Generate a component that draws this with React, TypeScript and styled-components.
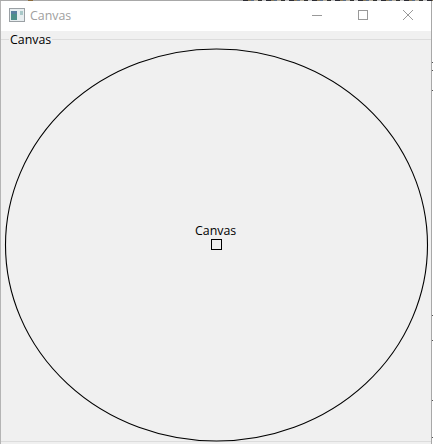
import React from "react";
import styled, { createGlobalStyle } from "styled-components";

const Global = createGlobalStyle`
  html, body { margin: 0; padding: 0; background: #f0f0f0; }
  #root { width: 433px; height: 444px; overflow: hidden; }
`;

const Desktop = styled.div`
  position: relative;
  width: 433px;
  height: 444px;
  background: #ffffff;
  display: flex;
  flex-direction: column;
`;

const TopEdge = styled.div`
  height: 1px;
  flex: none;
  background:
    repeating-linear-gradient(90deg, #2c2c34 0 5px, #8a7a5a 5px 8px, #5a6f8a 8px 11px, #b8b0a0 11px 15px, #333 15px 19px, #c8c8c8 19px 23px) 243px 0 / 190px 1px no-repeat,
    linear-gradient(90deg, #a8a8a8 0 28px, #8a6a3a 28px 33px, #a8a8a8 33px);
`;

const EdgeTick = styled.div<{ $y: number }>`
  position: absolute;
  right: 0;
  top: ${(p) => p.$y}px;
  width: 1px;
  height: 1px;
  background: #555555;
`;

const Window = styled.div`
  width: 432px;
  height: 443px;
  box-sizing: border-box;
  border-left: 1px solid #b4b4b4;
  border-right: 1px solid #a8a8a8;
  display: flex;
  flex-direction: column;
  font-family: "Open Sans", "Noto Sans", sans-serif;
`;

const TitleBar = styled.div`
  height: 30px;
  box-sizing: border-box;
  flex: none;
  background: #ffffff;
  display: flex;
  align-items: center;
  padding: 0 0 2px 8px;
`;

const AppIcon = styled.svg`
  width: 16px;
  height: 14px;
  flex: none;
`;

const Title = styled.span`
  margin-left: 5px;
  font-size: 12.4px;
  color: #a0a0a0;
`;

const Controls = styled.div`
  margin-left: auto;
  display: flex;
  align-items: center;
`;

const ControlButton = styled.div`
  width: 45.5px;
  height: 28px;
  display: flex;
  align-items: center;
  justify-content: center;
`;

const Client = styled.div`
  flex: 1;
  background: #f0f0f0;
  display: flex;
  padding: 8px 0 2px;
`;

const GroupFrame = styled.div`
  position: relative;
  flex: 1;
  border-top: 1px solid #dcdcdc;
  border-bottom: 1px solid #dcdcdc;
`;

const GroupLabel = styled.span`
  position: absolute;
  left: 8px;
  top: -8px;
  padding: 0 1px;
  background: #f0f0f0;
  color: #000000;
  font-size: 12.4px;
  line-height: 15px;
`;

const Plot = styled.svg`
  display: block;
  position: absolute;
  left: -1px;
  top: -40px;
  width: 433px;
  height: 444px;
`;

const CenterLabel = styled.span`
  position: absolute;
  left: 194px;
  top: 183px;
  color: #000000;
  font-size: 12.4px;
  line-height: 15px;
`;

const ticks = [62, 70, 90, 315, 340, 400, 437];

export default function App() {
  return (
    <>
      <Global />
      <Desktop>
        <TopEdge />
        {ticks.map((y) => (
          <EdgeTick key={y} $y={y} />
        ))}
        <Window>
          <TitleBar>
            <AppIcon viewBox="0 0 16 14">
              <rect x="0.5" y="0.5" width="15" height="13" fill="#e8eef0" stroke="#9aa0a4" />
              <rect x="2" y="3" width="6" height="9" fill="#4f8f8a" />
              <rect x="2" y="3" width="6" height="3" fill="#5a7fa0" />
              <rect x="11" y="3" width="3" height="4" fill="#a8c8c8" />
            </AppIcon>
            <Title>Canvas</Title>
            <Controls>
              <ControlButton>
                <svg width="10" height="10" viewBox="0 0 10 10">
                  <path d="M0 5.5H10" stroke="#999" fill="none" />
                </svg>
              </ControlButton>
              <ControlButton>
                <svg width="10" height="10" viewBox="0 0 10 10">
                  <rect x="0.5" y="0.5" width="9" height="9" stroke="#999" fill="none" />
                </svg>
              </ControlButton>
              <ControlButton>
                <svg width="10" height="10" viewBox="0 0 10 10">
                  <path d="M0 0L10 10M10 0L0 10" stroke="#999" fill="none" />
                </svg>
              </ControlButton>
            </Controls>
          </TitleBar>
          <Client>
            <GroupFrame>
              <GroupLabel>Canvas</GroupLabel>
              <Plot viewBox="0 0 433 444">
                <ellipse cx="216.5" cy="245" rx="211" ry="196" fill="none" stroke="#000" strokeWidth="1.1" />
                <rect x="211.5" y="239.5" width="10" height="10" fill="none" stroke="#000" strokeWidth="1" shapeRendering="crispEdges" />
              </Plot>
              <CenterLabel>Canvas</CenterLabel>
            </GroupFrame>
          </Client>
        </Window>
      </Desktop>
    </>
  );
}
